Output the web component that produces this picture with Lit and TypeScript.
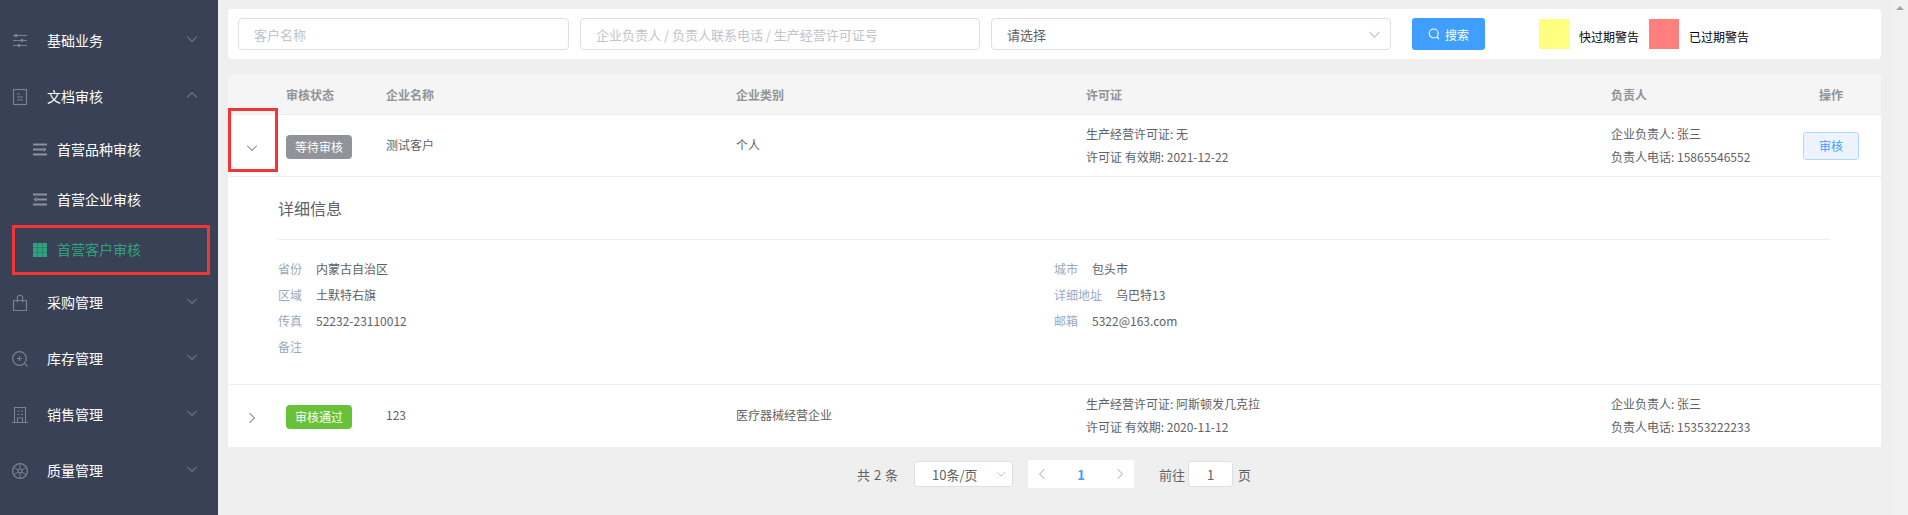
import { LitElement, html, css, svg, nothing } from "lit";
import { customElement } from "lit/decorators.js";

const chevron = (dir: "down" | "up" | "left" | "right", size = 10) => {
  const pts: Record<string, string> = {
    down: "1,3 5,7 9,3",
    up: "1,7 5,3 9,7",
    left: "7,1 3,5 7,9",
    right: "3,1 7,5 3,9",
  };
  return html`<svg class="chev" width=${size} height=${size} viewBox="0 0 10 10" fill="none" stroke="currentColor" stroke-width="0.9"><polyline points=${pts[dir]}></polyline></svg>`;
};

const menuIcons: Record<string, unknown> = {
  sliders: svg`<path d="M1 2.500h14M1 7.500h14M1 12.500h14" stroke-width="1"/><path d="M4 1v3M10 6v3M7 11v3" stroke-width="2.400"/>`,
  doc: svg`<rect x="1.500" y="0.500" width="13" height="15" stroke-width="1.200"/><path d="M5 5h3M5 8h6M5 11h6" stroke-width="1"/>`,
  bag: svg`<path d="M1.500 5.500h13v10h-13z" stroke-width="1.200"/><path d="M5.300 7.500V3a2.700 2.700 0 0 1 5.400 0v4.500" stroke-width="1.100"/>`,
  search: svg`<circle cx="7.500" cy="7.500" r="6.800" stroke-width="1.200"/><path d="M5 7.500h5M7.500 5v5M12.500 12.500l3 3" stroke-width="1.100"/>`,
  building: svg`<path d="M2.500 15.500V.5h11v15M0 15.500h16" stroke-width="1.100"/><path d="M5.500 4h2M9 4h2M5.500 7.500h2M9 7.500h2M5.500 15.500v-4.500h5v4.500" stroke-width="1.100"/>`,
  wheel: svg`<circle cx="8" cy="8" r="7.400" stroke-width="1.200"/><circle cx="8" cy="8" r="2" stroke-width="1.200"/><path d="M8 .5v5.500M8 10v5.500M1.500 4.200l4.800 2.800M9.700 9l4.800 2.800M1.500 11.800l4.800-2.800M9.700 7l4.800-2.800" stroke-width="1"/>`,
};

const subIcons: Record<string, unknown> = {
  right: svg`<path d="M0 1.500h14M0 6.500h10M0 11.500h14" stroke-width="2.200"/><path d="M10.500 4l3 2.500-3 2.500z" fill="currentColor" stroke="none"/>`,
  left: svg`<path d="M0 1.500h14M4 6.500h10M0 11.500h14" stroke-width="2.200"/><path d="M3.500 4l-3 2.500 3 2.500z" fill="currentColor" stroke="none"/>`,
};

interface MenuEntry { label: string; icon: string; open?: boolean }

@customElement("side-menu")
class SideMenu extends LitElement {
  static styles = css`
    :host { display: block; position: relative; width: 218px; background: #384155; padding-top: 13px; box-sizing: border-box; flex: none; color: #fff; font-size: 14px; }
    .item { height: 56px; display: flex; align-items: center; padding-left: 12px; box-sizing: border-box; }
    .icon { width: 16px; height: 16px; margin-right: 19px; color: #7b818e; flex: none; }
    .icon svg { display: block; overflow: visible; }
    .label { flex: 1; margin-top: -2px; }
    .item .chev { color: #6f7684; margin-right: 20px; margin-top: -5px; width: 12px; height: 12px; }
    .sub { height: 50px; display: flex; align-items: center; padding-left: 33px; }
    .sub span:last-child { margin-top: -2px; }
    .sub .icon { width: 14px; height: 14px; margin-right: 10px; color: #8d919b; }
    .sub.active { color: #2fa37f; }
    .sub.active .icon { color: #2fa37f; }
    .grid-bg { opacity: 0.55; }
    .mark { position: absolute; left: 12px; top: 225px; width: 198px; height: 50px; box-sizing: border-box; border: 3px solid #f33535; pointer-events: none; }
  `;
  private top: MenuEntry[] = [
    { label: "基础业务", icon: "sliders" },
    { label: "文档审核", icon: "doc", open: true },
  ];
  private bottom: MenuEntry[] = [
    { label: "采购管理", icon: "bag" },
    { label: "库存管理", icon: "search" },
    { label: "销售管理", icon: "building" },
    { label: "质量管理", icon: "wheel" },
  ];
  private entry(m: MenuEntry) {
    return html`<div class="item">
      <span class="icon"><svg width="16" height="16" viewBox="0 0 16 16" fill="none" stroke="currentColor">${menuIcons[m.icon]}</svg></span>
      <span class="label">${m.label}</span>
      ${chevron(m.open ? "up" : "down")}
    </div>`;
  }
  render() {
    return html`
      ${this.top.map((m) => this.entry(m))}
      <div class="sub"><span class="icon"><svg width="14" height="14" viewBox="0 0 14 14" fill="none" stroke="currentColor">${subIcons.right}</svg></span><span>首营品种审核</span></div>
      <div class="sub"><span class="icon"><svg width="14" height="14" viewBox="0 0 14 14" fill="none" stroke="currentColor">${subIcons.left}</svg></span><span>首营企业审核</span></div>
      <div class="sub active"><span class="icon"><svg width="14" height="14" viewBox="0 0 14 14" fill="currentColor"><rect class="grid-bg" width="14" height="14"/><path d="M0 0h4.200v4.200H0zM4.900 0h4.200v4.200H4.900zM9.800 0H14v4.200H9.800zM0 4.900h4.200v4.200H0zM4.900 4.900h4.200v4.200H4.900zM9.800 4.900H14v4.200H9.800zM0 9.800h4.200V14H0zM4.900 9.800h4.200V14H4.900zM9.800 9.800H14V14H9.800z"/></svg></span><span>首营客户审核</span></div>
      ${this.bottom.map((m) => this.entry(m))}
      <div class="mark"></div>
    `;
  }
}

@customElement("filter-bar")
class FilterBar extends LitElement {
  static styles = css`
    :host { display: flex; align-items: center; height: 50px; background: #fff; border-radius: 4px; padding-left: 10px; box-sizing: border-box; font-size: 13px; }
    .field { height: 32px; box-sizing: border-box; border: 1px solid #dcdfe6; border-radius: 4px; padding: 0 15px; display: flex; align-items: center; color: #c0c4cc; flex: none; }
    .name { width: 331px; margin-right: 11px; }
    .contact { width: 400px; margin-right: 11px; }
    .select { width: 400px; margin-right: 21px; color: #606266; justify-content: space-between; padding-right: 9px; }
    .select .chev { color: #c0c4cc; width: 13px; height: 13px; }
    .btn { width: 73px; height: 32px; background: #409eff; color: #fff; border-radius: 3px; display: flex; align-items: center; justify-content: center; gap: 5px; font-size: 12px; margin-right: 54px; flex: none; }
    .btn svg { display: block; }
    .swatch { width: 30px; height: 30px; flex: none; margin-right: 10px; }
    .y { background: #ffff7f; }
    .r { background: #ff7f7f; }
    .legend { font-size: 12px; color: #000; margin-right: 10px; margin-top: 4px; width: 60px; white-space: nowrap; }
  `;
  render() {
    return html`
      <div class="field name">客户名称</div>
      <div class="field contact">企业负责人 / 负责人联系电话 / 生产经营许可证号</div>
      <div class="field select"><span>请选择</span>${chevron("down")}</div>
      <div class="btn"><svg width="12" height="12" viewBox="0 0 12 12" fill="none" stroke="currentColor" stroke-width="1.100"><circle cx="5.700" cy="5.500" r="4.500"/><path d="M9 9l2 2"/></svg><span>搜索</span></div>
      <div class="swatch y"></div><div class="legend">快过期警告</div>
      <div class="swatch r"></div><div class="legend">已过期警告</div>
    `;
  }
}

interface Row { status: string; tone: string; name: string; kind: string; license: string; expiry: string; owner: string; phone: string; open: boolean; action: boolean }

@customElement("customer-table")
class CustomerTable extends LitElement {
  static styles = css`
    :host { display: block; background: #fff; font-size: 12px; color: #606266; position: relative; }
    .grid { display: grid; grid-template-columns: 58px 100px 350px 350px 525px 192px 78px; align-items: center; }
    .head { background: #f5f5f5; color: #909399; font-weight: 700; border-bottom: 1px solid #ebeef5; height: 39px; }
    .op { width: 56px; text-align: center; }
    .row { height: 61px; border-bottom: 1px solid #ebeef5; }
    .row.last { border-bottom: none; padding-bottom: 1px; }
    .toggle { display: flex; justify-content: center; padding-right: 10px; color: #909399; margin-top: 5px; }
    .toggle .chev { width: 12px; height: 12px; }
    .badge { display: inline-flex; width: 66px; height: 24px; align-items: center; justify-content: center; border-radius: 4px; color: #fff; margin-top: 2px; }
    .gray { background: #909399; }
    .green { background: #67c23a; }
    .cell { margin-top: -2px; }
    .lines { display: flex; flex-direction: column; gap: 5px; line-height: 18px; }
    .review { display: flex; width: 56px; height: 28px; box-sizing: border-box; background: #ecf5ff; border: 1px solid #b3d8ff; color: #409eff; border-radius: 3px; align-items: center; justify-content: center; }
    .detail { padding: 0 51px 0 50px; height: 207px; border-bottom: 1px solid #ebeef5; }
    h4 { margin: 0; height: 63px; display: flex; align-items: center; font-size: 16px; font-weight: 400; color: #606266; border-bottom: 1px solid #ebeef5; box-sizing: border-box; }
    .info { display: grid; grid-template-columns: 776px 1fr; padding-top: 16px; grid-auto-rows: 26px; }
    .pair { display: flex; align-items: center; gap: 14px; margin-top: -2px; }
    .pair b { font-weight: 400; color: #99a9bf; }
    .mark { position: absolute; left: 0; top: 33px; width: 50px; height: 64px; box-sizing: border-box; border: 3px solid #f33535; pointer-events: none; }
  `;
  private rows: Row[] = [
    { status: "等待审核", tone: "gray", name: "测试客户", kind: "个人", license: "无", expiry: "2021-12-22", owner: "张三", phone: "15865546552", open: true, action: true },
    { status: "审核通过", tone: "green", name: "123", kind: "医疗器械经营企业", license: "阿斯顿发几克拉", expiry: "2020-11-12", owner: "张三", phone: "15353222233", open: false, action: false },
  ];
  private info = [
    ["省份", "内蒙古自治区", "城市", "包头市"],
    ["区域", "土默特右旗", "详细地址", "乌巴特13"],
    ["传真", "52232-23110012", "邮箱", "5322@163.com"],
    ["备注", "", "", ""],
  ];
  private rowView(r: Row, last = false) {
    return html`<div class="grid row ${last ? "last" : ""}">
      <div class="toggle">${chevron(r.open ? "down" : "right")}</div>
      <div><span class="badge ${r.tone}">${r.status}</span></div>
      <div class="cell">${r.name}</div>
      <div class="cell">${r.kind}</div>
      <div class="lines"><span>生产经营许可证: ${r.license}</span><span>许可证 有效期: ${r.expiry}</span></div>
      <div class="lines"><span>企业负责人: ${r.owner}</span><span>负责人电话: ${r.phone}</span></div>
      <div>${r.action ? html`<span class="review">审核</span>` : nothing}</div>
    </div>`;
  }
  render() {
    const [a, b] = this.rows;
    return html`
      <div class="grid head"><div></div><div>审核状态</div><div>企业名称</div><div>企业类别</div><div>许可证</div><div>负责人</div><div class="op">操作</div></div>
      ${this.rowView(a)}
      <div class="detail">
        <h4>详细信息</h4>
        <div class="info">
          ${this.info.map((i) => html`
            <div class="pair"><b>${i[0]}</b><span>${i[1]}</span></div>
            <div class="pair">${i[2] ? html`<b>${i[2]}</b><span>${i[3]}</span>` : nothing}</div>
          `)}
        </div>
      </div>
      ${this.rowView(b, true)}
      <div class="mark"></div>
    `;
  }
}

@customElement("page-bar")
class PageBar extends LitElement {
  static styles = css`
    :host { display: flex; align-items: center; height: 28px; margin-top: 13px; padding-left: 629px; font-size: 13px; color: #606266; }
    .total { width: 57px; flex: none; white-space: nowrap; word-spacing: 1px; }
    .size { width: 99px; height: 26px; box-sizing: border-box; background: #fff; border: 1px solid #dcdfe6; border-radius: 3px; display: flex; align-items: center; justify-content: space-between; padding: 0 6px 0 17px; margin-right: 15px; flex: none; }
    .size .chev { color: #c0c4cc; }
    .pager { width: 106px; height: 28px; background: #fff; display: flex; align-items: center; justify-content: space-between; padding: 0 8px; box-sizing: border-box; margin-right: 25px; flex: none; color: #c0c4cc; }
    .pager b { color: #409eff; font-weight: 700; }
    .pager .chev { width: 12px; height: 12px; }
    .jump { width: 45px; height: 26px; box-sizing: border-box; background: #fff; border: 1px solid #dcdfe6; border-radius: 3px; display: flex; align-items: center; justify-content: center; margin: 0 5px 0 3px; flex: none; }
  `;
  render() {
    return html`
      <span class="total">共 2 条</span>
      <div class="size"><span>10条/页</span>${chevron("down")}</div>
      <div class="pager">${chevron("left")}<b>1</b>${chevron("right")}</div>
      <span>前往</span><div class="jump">1</div><span>页</span>
    `;
  }
}

@customElement("app-root")
class AppRoot extends LitElement {
  static styles = css`
    :host { display: flex; height: 515px; overflow: hidden; background: #efefef; font-family: "Noto Sans CJK SC", "Noto Sans", sans-serif; }
    .main { flex: 1; min-width: 0; padding: 9px 10px 0; }
    filter-bar { margin-bottom: 16px; }
    .scroll { width: 17px; flex: none; background: #f0f0f0; display: flex; justify-content: center; padding-top: 6px; box-sizing: border-box; }
    .arrow { width: 0; height: 0; border: 4px solid transparent; border-top: 0; border-bottom: 4px solid #a3a3a3; }
  `;
  render() {
    return html`
      <side-menu></side-menu>
      <div class="main">
        <filter-bar></filter-bar>
        <customer-table></customer-table>
        <page-bar></page-bar>
      </div>
      <div class="scroll"><div class="arrow"></div></div>
    `;
  }
}
